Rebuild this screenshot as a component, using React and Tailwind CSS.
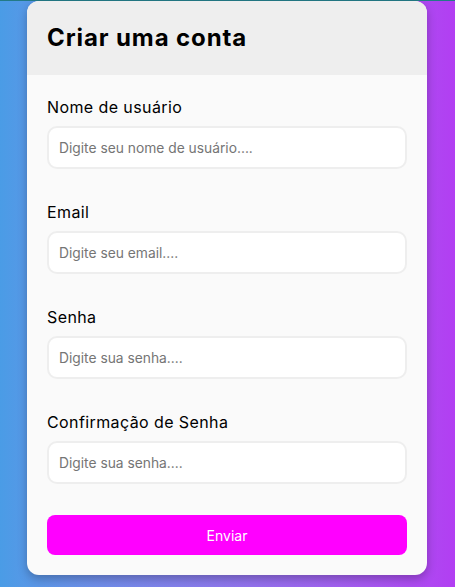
import React from "react";

const fields = [
  { label: "Nome de usuário", placeholder: "Digite seu nome de usuário....", type: "text" },
  { label: "Email", placeholder: "Digite seu email....", type: "email" },
  { label: "Senha", placeholder: "Digite sua senha....", type: "password" },
  { label: "Confirmação de Senha", placeholder: "Digite sua senha....", type: "password" },
];

export default function App() {
  return (
    <div
      className="min-h-screen border-t border-[#237a87] bg-gradient-to-r from-[#4a9ce6] to-[#b23ef2]"
      style={{ fontFamily: "Inter, 'Open Sans', sans-serif" }}
    >
      <div className="ml-[27px] w-[400px] overflow-hidden rounded-xl bg-[#fafafa] shadow-[0_4px_10px_rgba(0,0,0,0.25)]">
        <div className="flex h-[74px] items-center bg-[#eeeeee] px-5">
          <h1 className="text-[24px] font-bold tracking-[0.9px] text-black">Criar uma conta</h1>
        </div>

        <form className="px-5 pt-5 pb-5" onSubmit={(e) => e.preventDefault()}>
          {fields.map((f, i) => (
            <div key={i} className="mb-[31px]">
              <label className="mb-[7px] block text-[16px] leading-6 tracking-[0.4px] text-black">{f.label}</label>
              <input
                type={f.type}
                placeholder={f.placeholder}
                className="h-[43px] w-full rounded-[10px] border-2 border-[#eeeeee] bg-white px-[10px] text-[13.8px] text-black outline-none placeholder:text-[#757575]"
              />
            </div>
          ))}
          <button
            type="submit"
            className="h-[40px] w-full rounded-[8px] bg-[#ff00ff] text-[14px] text-white"
          >
            Enviar
          </button>
        </form>
      </div>
    </div>
  );
}
